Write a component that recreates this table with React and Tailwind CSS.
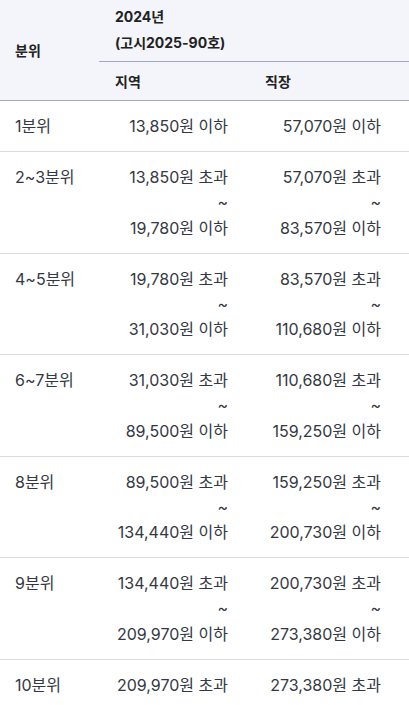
const rows = [
  { label: "1분위", local: ["13,850원 이하"], work: ["57,070원 이하"] },
  { label: "2~3분위", local: ["13,850원 초과", "19,780원 이하"], work: ["57,070원 초과", "83,570원 이하"] },
  { label: "4~5분위", local: ["19,780원 초과", "31,030원 이하"], work: ["83,570원 초과", "110,680원 이하"] },
  { label: "6~7분위", local: ["31,030원 초과", "89,500원 이하"], work: ["110,680원 초과", "159,250원 이하"] },
  { label: "8분위", local: ["89,500원 초과", "134,440원 이하"], work: ["159,250원 초과", "200,730원 이하"] },
  { label: "9분위", local: ["134,440원 초과", "209,970원 이하"], work: ["200,730원 초과", "273,380원 이하"] },
  { label: "10분위", local: ["209,970원 초과"], work: ["273,380원 초과"] },
];

function Range({ items }) {
  if (items.length === 1) return <div className="h-[26px]">{items[0]}</div>;
  return (
    <>
      <div className="h-[26px]">{items[0]}</div>
      <div className="h-[24.5px] leading-[24.5px]">~</div>
      <div className="h-[26px]">{items[1]}</div>
    </>
  );
}

export default function App() {
  return (
    <div
      className="w-[409px] bg-white text-[#333842]"
      style={{ fontFamily: 'Inter, "Noto Sans CJK KR", sans-serif' }}
    >
      <table className="w-full border-collapse table-fixed">
        <colgroup>
          <col className="w-[99px]" />
          <col className="w-[150px]" />
          <col />
        </colgroup>
        <thead className="bg-[#f4f5fa] text-[14px] font-bold text-[#222]">
          <tr>
            <th rowSpan={2} className="text-left font-bold pl-[15px] align-middle border-b border-[#a4a8c2]">
              분위
            </th>
            <th colSpan={2} className="text-left font-bold pl-[16px] pt-[4px] pb-[5px] leading-[26px] border-b border-[#a4a8c2]">
              <div>2024년</div>
              <div>(고시2025-90호)</div>
            </th>
          </tr>
          <tr>
            <th className="text-left font-bold pl-[16px] h-[39px] border-b border-[#a4a8c2]">지역</th>
            <th className="text-left font-bold pl-[16px] h-[39px] border-b border-[#a4a8c2]">직장</th>
          </tr>
        </thead>
        <tbody className="text-[16px] leading-[26px]">
          {rows.map((r) => (
            <tr key={r.label} className="border-b border-[#dddddd]">
              <td className="align-top pl-[15px] py-[12px]">{r.label}</td>
              <td className="align-top text-right pr-[21px] py-[12px]">
                <Range items={r.local} />
              </td>
              <td className="align-top text-right pr-[28px] py-[12px]">
                <Range items={r.work} />
              </td>
            </tr>
          ))}
        </tbody>
      </table>
    </div>
  );
}
